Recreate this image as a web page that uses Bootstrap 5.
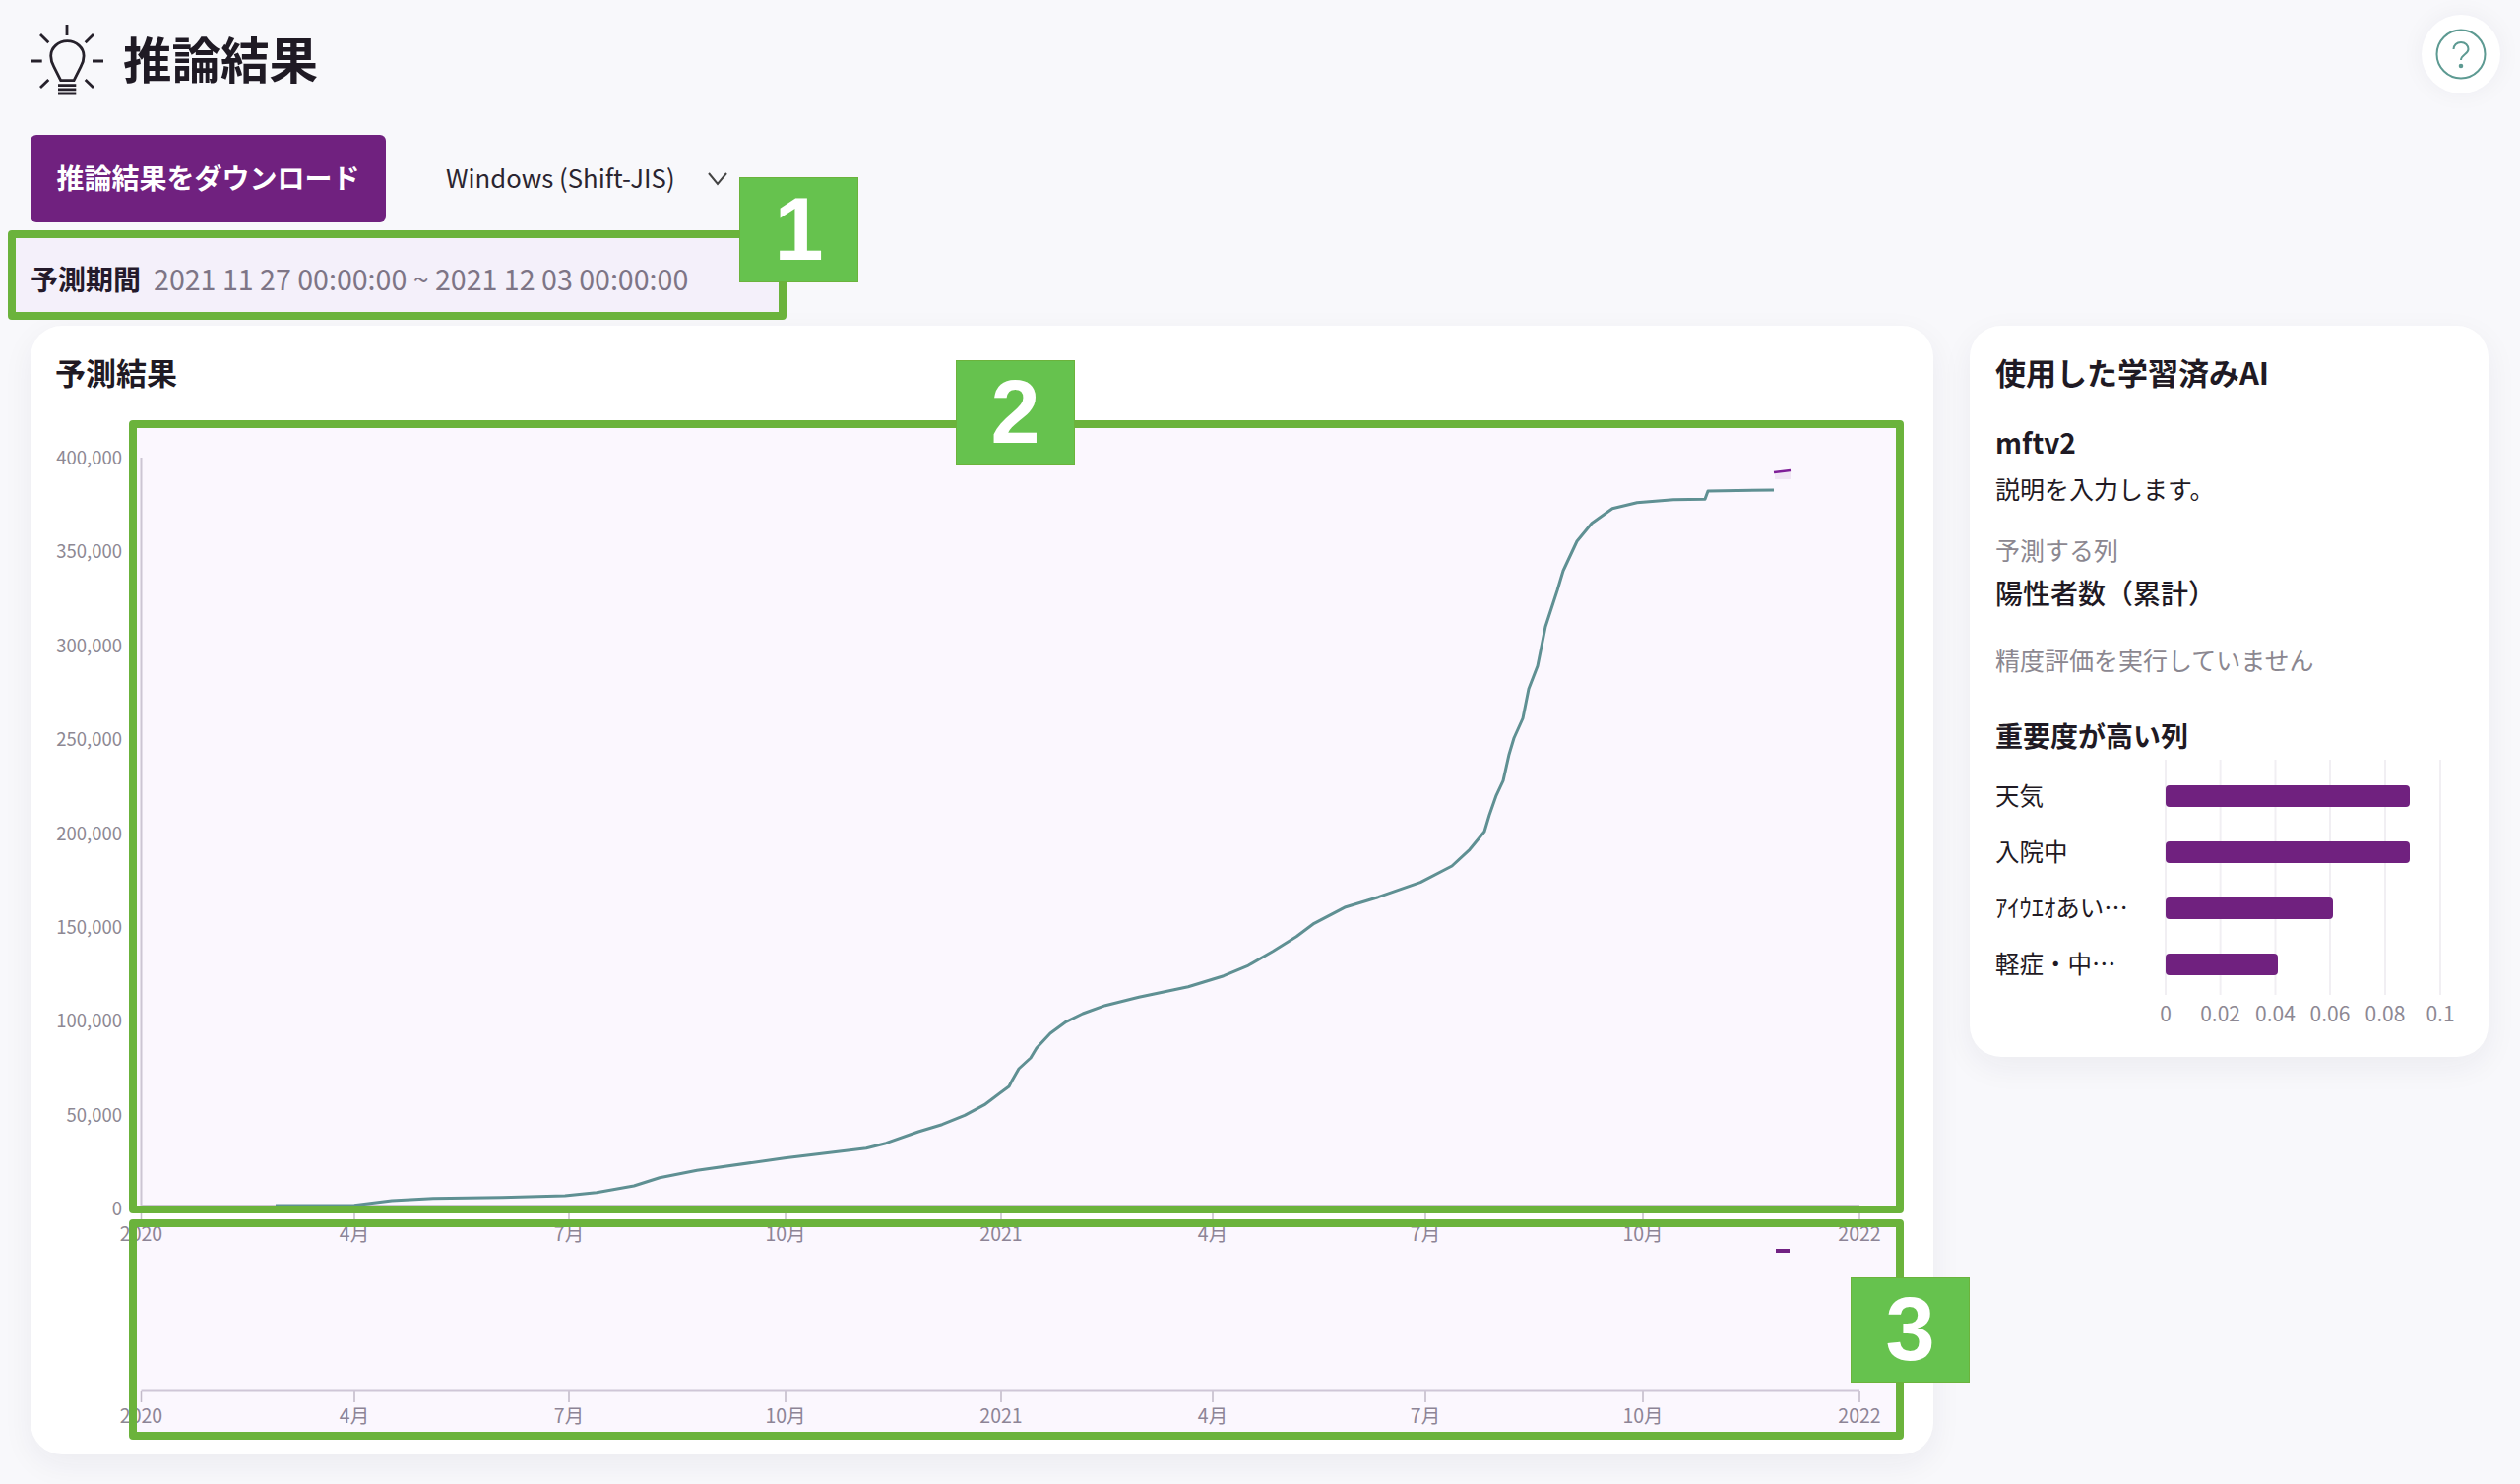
<!DOCTYPE html>
<html lang="ja">
<head>
  <meta charset="UTF-8">
  <title>推論結果</title>
  <meta name="viewport" content="width=device-width, initial-scale=1">
  <link href="https://cdn.jsdelivr.net/npm/bootstrap@5.3.3/dist/css/bootstrap.min.css" rel="stylesheet">
  <script src="https://cdn.jsdelivr.net/npm/bootstrap@5.3.3/dist/js/bootstrap.bundle.min.js"></script>
  <style>
    body {
      background: #f8f8fb;
      color: #1f1a24;
      font-family: "Noto Sans CJK JP", "Noto Sans", sans-serif;
      min-height: 1508px;
      overflow: hidden;
    }
    .page-wrap { position: relative; padding: 25px 32px 0 31px; }
    .page-head { height: 112px; }
    .page-title { font-size: 49.5px; font-weight: 700; line-height: 68px; margin: 0 0 4px 20px; }
    .help-btn {
      width: 80px; height: 80px; margin: -10px -12px 0 0; padding: 0; border: 0; border-radius: 50%;
      background: #fff; box-shadow: 0 0 24px rgba(40, 40, 60, .05);
    }
    .dl-btn {
      width: 361px; height: 89px; padding: 0 0 3px; border: 0; border-radius: 6px;
      background: #70217f; color: #fff; font-size: 28px; font-weight: 700;
    }
    .enc-select {
      width: 305px; margin-left: 50px; padding: 0 36px 3px 11px; border: 0; box-shadow: none;
      background-color: transparent; color: #2a2530; font-size: 25.7px;
      background-position: right 6px center; background-size: 24px 16px;
      background-image: url("data:image/svg+xml,%3csvg xmlns='http://www.w3.org/2000/svg' viewBox='0 0 24 16'%3e%3cpath fill='none' stroke='%23444' stroke-width='2' d='M3 3l9 11 9-11'/%3e%3c/svg%3e");
    }
    .period-row { height: 105px; padding-top: 37px; font-size: 28px; line-height: 40px; white-space: nowrap; }
    .period-row b { font-weight: 700; margin-right: 13px; }
    .period-row span { color: #7d7883; font-size: 28.6px; }
    .soft-card { background: #fff; border-radius: 32px; box-shadow: 0 10px 32px rgba(40, 40, 60, .06); }
    .result-card { width: 1933px; height: 1147px; flex: none; }
    .ai-card { width: 527px; height: 743px; flex: none; margin-left: 37px; padding: 27px 26px 0; }
    .card-heading { font-size: 31px; font-weight: 700; line-height: 40px; margin: 0; }
    .result-card .card-heading { padding: 27px 0 0 25px; height: 69px; }
    .chart-svg { display: block; }
    .ax { font-size: 19.5px; fill: #8d8893; font-family: "Noto Sans CJK JP", sans-serif; }
    .ax-y { font-size: 18.5px; }
    .model-name { font-size: 28px; font-weight: 700; line-height: 40px; margin-top: 31px; }
    .model-desc { font-size: 25px; line-height: 40px; margin-top: 7px; }
    .muted-line { font-size: 25px; line-height: 36px; color: #8b8790; }
    .pred-label { margin-top: 24px; }
    .target-name { font-size: 28px; font-weight: 500; line-height: 40px; margin-top: 6px; }
    .eval-note { margin-top: 30px; }
    .imp-heading { font-size: 28px; font-weight: 700; line-height: 40px; margin: 39px 0 0; }
    .imp-svg { display: block; margin: 1px 0 0 -26px; }
    .imp-svg text { font-family: "Noto Sans CJK JP", sans-serif; }
    .anno-box {
      position: absolute; border: 8px solid #6bb33c; border-radius: 4px;
      background: rgba(160, 60, 240, .04); pointer-events: none;
    }
    .anno-1 { left: 8px; top: 234px; width: 791px; height: 91px; }
    .anno-2 { left: 131px; top: 427px; width: 1803px; height: 806px; }
    .anno-3 { left: 131px; top: 1239px; width: 1803px; height: 224px; }
    .anno-tag {
      position: absolute; width: 121px; height: 107px; background: #66c24e; border: 1px solid #6bb33c;
      color: #fff; font: 700 90px/105px "Liberation Sans", Arial, sans-serif; text-align: center;
    }
    .tag-1 { left: 751px; top: 180px; }
    .tag-2 { left: 971px; top: 366px; }
    .tag-3 { left: 1880px; top: 1298px; }
  </style>
</head>
<body>
  <div class="page-wrap">
    <div class="page-head d-flex justify-content-between align-items-start">
      <div class="d-flex align-items-center">
        <!-- bulb icon -->
        <svg width="74" height="72" viewBox="0 0 74 72" fill="none" stroke="#26212b" stroke-width="2.8">
          <path d="M37 0v11M.7 37h11M63 37h11M10 10l8.3 8.3M64 10l-8.3 8.3M10 64l8.300-8M64 64l-8.300-8"/>
          <path d="M30.700 56.700l-7-14c-1.800-3.400-3-6.600-3-11a16.700 15 0 0 1 33.400 0c0 4.400-1.200 7.600-3 11l-7 14z"/>
          <path d="M28 61.700h18.300M28 65.800h18.300M28 70h18.300"/>
        </svg>
        <h1 class="page-title">推論結果</h1>
      </div>
      <button class="help-btn d-flex align-items-center justify-content-center" type="button" aria-label="help">
        <svg width="52" height="52" viewBox="0 0 52 52" fill="none" stroke="#5d9a92" stroke-width="2">
          <circle cx="26" cy="26" r="24.500"/>
          <path d="M18.500 21c0-4 3.200-7 7.500-7s7.500 3 7.500 7c0 5-7.500 5.500-7.500 11"/>
          <circle cx="26" cy="38" r="1.300" fill="#5d9a92"/>
        </svg>
      </button>
    </div>

    <div class="d-flex align-items-center">
      <button class="btn dl-btn" type="button">推論結果をダウンロード</button>
      <select class="form-select enc-select">
        <option>Windows (Shift-JIS)</option>
        <option>UTF-8</option>
      </select>
    </div>

    <div class="period-row"><b>予測期間</b><span>2021 11 27 00:00:00 ~ 2021 12 03 00:00:00</span></div>

    <div class="d-flex align-items-start">
      <!-- forecast chart -->
      <div class="soft-card result-card">
        <h2 class="card-heading">予測結果</h2>
        <svg id="forecastChart" class="chart-svg" width="1933" height="1078" viewBox="31 400 1933 1078"></svg>
      </div>

      <!-- model info -->
      <div class="soft-card ai-card">
        <h2 class="card-heading">使用した学習済みAI</h2>
        <div class="model-name">mftv2</div>
        <div class="model-desc">説明を入力します。</div>
        <div class="muted-line pred-label">予測する列</div>
        <div class="target-name">陽性者数（累計）</div>
        <div class="muted-line eval-note">精度評価を実行していません</div>
        <h3 class="imp-heading">重要度が高い列</h3>
        <svg id="importanceChart" class="imp-svg" width="527" height="290" viewBox="2001 768 527 290"></svg>
      </div>
    </div>

    <!-- numbered callouts -->
    <div class="anno-box anno-1"></div>
    <div class="anno-box anno-2"></div>
    <div class="anno-box anno-3"></div>
    <div class="anno-tag tag-1">1</div>
    <div class="anno-tag tag-2">2</div>
    <div class="anno-tag tag-3">3</div>
  </div>

  <script>
    const xTicks = [
      [143.5, "2020"], [360, "4月"], [578, "7月"], [798, "10月"], [1017, "2021"],
      [1232, "4月"], [1448, "7月"], [1669, "10月"], [1889, "2022"]
    ];
    const yTicks = ["400,000", "350,000", "300,000", "250,000", "200,000", "150,000", "100,000", "50,000", "0"];

    // curve traced from the source chart, page pixels
    const curve = [
      [280,1225],[360,1224.7],[398,1220],[440,1217.7],[510,1216.7],[574,1215],[606,1211.7],[644,1205],[670,1196.7],
      [708,1189.3],[797,1176.7],[880,1166.7],[900,1161.7],[933,1150],[957,1142.7],[980,1133.3],[1000,1122.7],
      [1025,1104],[1028,1098.3],[1035,1086],[1047,1075],[1053,1065],[1067,1050],[1083,1038.3],[1100,1030],
      [1123,1021.7],[1157,1013.3],[1207,1002.7],[1243,991.7],[1267,981.7],[1293,966.7],[1317,951.7],[1335,938.3],
      [1367,921.7],[1400,911.7],[1443,896.7],[1475,880],[1493,863.3],[1508,845],[1513,828.3],[1520,808.3],
      [1527,793.3],[1533,766.7],[1538,750],[1547,730],[1553,700],[1562,676.7],[1570,636.7],[1582,600],[1588,580],
      [1602,550],[1617,531.7],[1638,516.7],[1663,510.7],[1700,507.7],[1732,507.3],[1735,499],[1802,498]
    ].map(p => p.join(",")).join(" ");

    let html = `<path d="M143.500 465V1225H1889" fill="none" stroke="#cfcbd3" stroke-width="2"/>`;
    yTicks.forEach((label, i) => {
      const y = 465 + i * 95.4;
      html += `<text class="ax ax-y" x="124" y="${y + 7}" text-anchor="end">${label}</text>`;
    });
    xTicks.forEach(([x, label]) => {
      html += `<path d="M${x} 1225v15M${x} 1413v12" stroke="#c4c0c8" stroke-width="1.500"/>`;
      html += `<text class="ax" x="${x}" y="1261" text-anchor="middle">${label}</text>`;
      html += `<text class="ax" x="${x}" y="1446" text-anchor="middle">${label}</text>`;
    });
    html += `<path d="M143.500 1413H1889" stroke="#d2cdd7" stroke-width="3"/>`;
    html += `<polyline points="${curve}" fill="none" stroke="#5d9490" stroke-width="3" stroke-linejoin="round"/>`;
    html += `<rect x="1803" y="480" width="16" height="7" fill="#70217f" opacity=".08"/>`;
    html += `<path d="M1802 480l17-2" stroke="#7e1f95" stroke-width="2.500"/>`;
    html += `<rect x="1804" y="1269" width="14" height="4" fill="#70217f"/>`;
    document.getElementById("forecastChart").innerHTML = html;

    // importance bars
    const bars = [["天気", 2448, 809], ["入院中", 2448, 866], ["ｱｲｳｴｵあい…", 2370, 923], ["軽症・中…", 2314, 980]];
    const grid = [[2200, "0"], [2255.6, "0.02"], [2311.5, "0.04"], [2367, "0.06"], [2423, "0.08"], [2479, "0.1"]];
    let imp = "";
    grid.forEach(([x, label]) => {
      imp += `<path d="M${x} 772V1011" stroke="#f1eff3" stroke-width="2"/>`;
      imp += `<text x="${x}" y="1038" font-size="21" fill="#8d8893" text-anchor="middle">${label}</text>`;
    });
    bars.forEach(([label, end, y]) => {
      imp += `<rect x="2200" y="${y - 11}" width="${end - 2200}" height="22" rx="4" fill="#70217f"/>`;
      imp += `<text x="2027" y="${y + 9}" font-size="24.5" fill="#1f1a24">${label}</text>`;
    });
    document.getElementById("importanceChart").innerHTML = imp;
  </script>
</body>
</html>
